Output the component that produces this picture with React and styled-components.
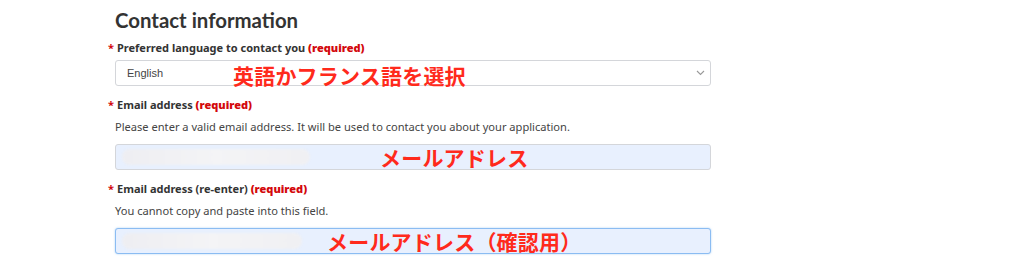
import React from 'react';
import styled, { createGlobalStyle } from 'styled-components';

const Global = createGlobalStyle`
  html, body {
    margin: 0;
    padding: 0;
    background: #fff;
  }
  body {
    font-family: "Noto Sans", "Open Sans", sans-serif;
    color: #333;
  }
`;

const Page = styled.main`
  width: 1024px;
  height: 262px;
  overflow: hidden;
  padding: 0 0 0 115px;
  box-sizing: border-box;
`;

const Heading = styled.h2`
  margin: 0;
  padding-top: 7px;
  font-family: "Lato", sans-serif;
  font-weight: 700;
  font-size: 20.4px;
  line-height: 26px;
  color: #333;
`;

const Field = styled.section`
  display: flex;
  flex-direction: column;
  width: 596px;
  margin-top: ${(p) => p.$top || 0}px;
`;

const Label = styled.label`
  position: relative;
  display: block;
  font-size: 11px;
  line-height: 14px;
  font-weight: 700;
  color: #333;
  padding-left: 2px;

  &:before {
    content: '*';
    position: absolute;
    left: -7px;
    top: 0;
    color: #d3080c;
  }
`;

const Required = styled.strong`
  color: #d3080c;
`;

const Help = styled.p`
  margin: 8px 0 0;
  font-size: 11.1px;
  line-height: 14px;
  color: #444;
`;

const Box = styled.div`
  position: relative;
  box-sizing: border-box;
  height: 26px;
  margin-top: ${(p) => p.$gap}px;
  border: 1px solid ${(p) => (p.$focus ? '#8bbcf2' : '#d4d6da')};
  border-radius: 3px;
  background: ${(p) => (p.$filled ? '#e8f0fe' : '#fff')};
  box-shadow: ${(p) => (p.$focus ? '0 0 2px rgba(102, 170, 238, 0.6)' : 'none')};
  display: flex;
  align-items: center;
  padding: 0 6px;
`;

const Value = styled.span`
  font-family: "Liberation Sans", "Noto Sans", sans-serif;
  font-size: 11px;
  color: #444;
  padding-left: 5px;
`;

const Chevron = styled.svg`
  margin-left: auto;
  margin-right: -1px;
`;

const Smudge = styled.div`
  width: ${(p) => p.$w}px;
  height: 16px;
  border-radius: 8px;
  background: linear-gradient(90deg, #eeeef2, #f4f4f6 50%, #f0f0f3);
  filter: blur(1px);
`;

const Note = styled.span`
  position: absolute;
  left: ${(p) => p.$x}px;
  top: ${(p) => p.$y}px;
  font-family: "Noto Sans CJK JP", sans-serif;
  font-weight: 700;
  font-size: 21px;
  line-height: 24px;
  color: #ff2a1c;
  white-space: nowrap;
  letter-spacing: 0.2px;
`;

export default function App() {
  return (
    <>
      <Global />
      <Page>
        <Heading>Contact information</Heading>
        <Field $top={8}>
          <Label>
            Preferred language to contact you <Required>(required)</Required>
          </Label>
          <Box $gap={5}>
            <Value>English</Value>
            <Chevron width="9" height="6" viewBox="0 0 9 6">
              <path d="M1 1l3.5 3.5L8 1" fill="none" stroke="#999" strokeWidth="1.1" />
            </Chevron>
            <Note $x={117} $y={2}>英語かフランス語を選択</Note>
          </Box>
        </Field>
        <Field $top={12}>
          <Label>
            Email address <Required>(required)</Required>
          </Label>
          <Help>Please enter a valid email address. It will be used to contact you about your application.</Help>
          <Box $gap={10} $filled>
            <Smudge $w={188} />
            <Note $x={264} $y={0}>メールアドレス</Note>
          </Box>
        </Field>
        <Field $top={12}>
          <Label>
            Email address (re-enter) <Required>(required)</Required>
          </Label>
          <Help>You cannot copy and paste into this field.</Help>
          <Box $gap={10} $filled $focus>
            <Smudge $w={180} />
            <Note $x={211} $y={0}>メールアドレス（確認用）</Note>
          </Box>
        </Field>
      </Page>
    </>
  );
}
